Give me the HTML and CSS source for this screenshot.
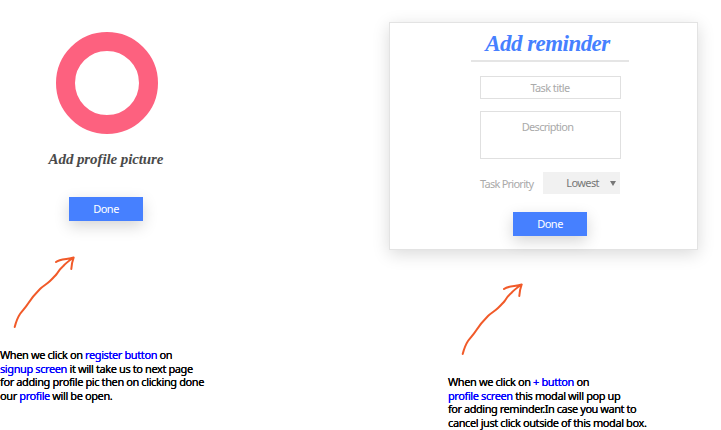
FILE: index.html
```
<!DOCTYPE html>
<html lang="en">
<head>
<meta charset="utf-8">
<title>Reminder screens</title>
<link rel="stylesheet" href="styles.css">
</head>
<body>
<main class="board">
  <section class="profile">
    <div class="card">
      <div class="ring"></div>
      <h2 class="script caption">Add profile picture</h2>
      <button class="done">Done</button>
    </div>
    <svg class="arrow" width="64" height="75" viewBox="0 0 64 75"><path d="M2.700 71C4 66 6 61 8 58C11 54 14 51 16.300 47.300C19 43 24 37 28 33C31 30 35 28 38 25C41 22 43 20 44.700 18C47 14 49 12 51.300 10C54 7 58 4 61.700 1.500M44 6C48 2.500 56 3.500 61.700 1.500C60 6 59.500 9 59.300 13"/></svg>
    <div class="note">
      <p>When we click on <b>register button</b> on</p>
      <p><b>signup screen</b> it will take us to next page</p>
      <p>for adding profile pic then on clicking done</p>
      <p>our <b>profile</b> will be open.</p>
    </div>
  </section>
  <section class="reminder">
    <div class="modal">
      <h1 class="script title">Add reminder</h1>
      <div class="field">Task title</div>
      <div class="field area">Description</div>
      <div class="priority">
        <span class="label">Task Priority</span>
        <div class="select"><span>Lowest</span><svg width="6" height="5" viewBox="0 0 6 5"><path d="M0 0H6L3 5Z"/></svg></div>
      </div>
      <button class="done">Done</button>
    </div>
    <svg class="arrow" width="64" height="75" viewBox="0 0 64 75"><path d="M2.700 71C4 66 6 61 8 58C11 54 14 51 16.300 47.300C19 43 24 37 28 33C31 30 35 28 38 25C41 22 43 20 44.700 18C47 14 49 12 51.300 10C54 7 58 4 61.700 1.500M44 6C48 2.500 56 3.500 61.700 1.500C60 6 59.500 9 59.300 13"/></svg>
    <div class="note">
      <p>When we click on <b>+ button</b> on</p>
      <p><b>profile screen</b> this modal will pop up</p>
      <p class="tight">for adding reminder.In case you want to</p>
      <p>cancel just click outside of this modal box.</p>
    </div>
  </section>
</main>
</body>
</html>
```
FILE: styles.css
```
* { box-sizing: border-box; }
body, h1, h2, p { margin: 0; }
body {
  width: 721px;
  height: 430px;
  background: #fff;
  font: 11px/14px "Noto Sans", sans-serif;
}
.board { display: grid; grid-template-columns: 389px 332px; height: 430px; }
.script {
  font-family: "Liberation Serif", serif;
  font-style: italic;
  font-weight: bold;
  text-align: center;
  white-space: nowrap;
}
.card {
  display: flex;
  flex-direction: column;
  align-items: center;
  width: 212px;
  padding-top: 32px;
}
.ring { width: 102px; height: 102px; margin-left: 2px; border: 19px solid #fd617f; border-radius: 50%; }
.caption { margin-top: 15px; height: 20px; font-size: 15px; line-height: 20px; color: #4a4a4a; letter-spacing: -.1px; }
.done {
  display: block;
  width: 74px;
  height: 24px;
  padding: 0 0 1px;
  border: 0;
  background: #4680ff;
  color: #fff;
  font: 11px/23px "Noto Sans", sans-serif;
  letter-spacing: -.5px;
  box-shadow: 0 5px 15px rgba(0, 0, 0, .17);
}
.card .done { margin-top: 28px; }
.arrow { display: block; fill: none; stroke: #f15a29; stroke-width: 2; stroke-linecap: round; stroke-linejoin: round; }
.profile .arrow { margin: 35px 0 0 12px; }
.note { color: #000; white-space: nowrap; text-shadow: 0 0 .3px #000; }
.profile .note { margin-top: 17px; }
.note p { height: 13.600px; line-height: 13.600px; letter-spacing: -.4px; }
.note .tight { letter-spacing: -.46px; }
.note b { color: #00f; font-weight: normal; text-shadow: 0 0 .3px #00f; }
.modal {
  display: flex;
  flex-direction: column;
  align-items: center;
  width: 309px;
  height: 228px;
  margin-top: 22px;
  padding-left: 13px;
  border: 1px solid #e3e3e3;
  background: #fff;
  box-shadow: 0 4px 16px rgba(0, 0, 0, .15);
}
.title { width: 158px; height: 39px; padding: 5px 5px 0 0; border-bottom: 2px solid #e5e5e5; color: #4680ff; font-size: 23px; line-height: 31px; letter-spacing: -.55px; }
.field {
  width: 141px;
  height: 23px;
  margin-top: 14px;
  border: 1px solid #e0e0e0;
  color: #aaa;
  text-align: center;
  line-height: 22px;
  letter-spacing: -.6px;
}
.area { height: 48px; margin-top: 12px; padding: 4px 5px 0 0; letter-spacing: -.7px; }
.priority { display: flex; justify-content: space-between; width: 140px; height: 22px; margin-top: 13px; }
.label { color: #aaa; line-height: 24px; letter-spacing: -.75px; }
.select { display: flex; align-items: center; justify-content: flex-end; gap: 11px; width: 77px; padding-right: 4px; background: #f1f1f1; color: #777; line-height: 20px; letter-spacing: -.6px; }
.select span { margin-top: -1px; }
.select svg { fill: #777; }
.modal .done { margin-top: 18px; }
.reminder .arrow { margin: 33px 0 0 71px; }
.reminder .note { margin: 17px 0 0 59px; }
```
